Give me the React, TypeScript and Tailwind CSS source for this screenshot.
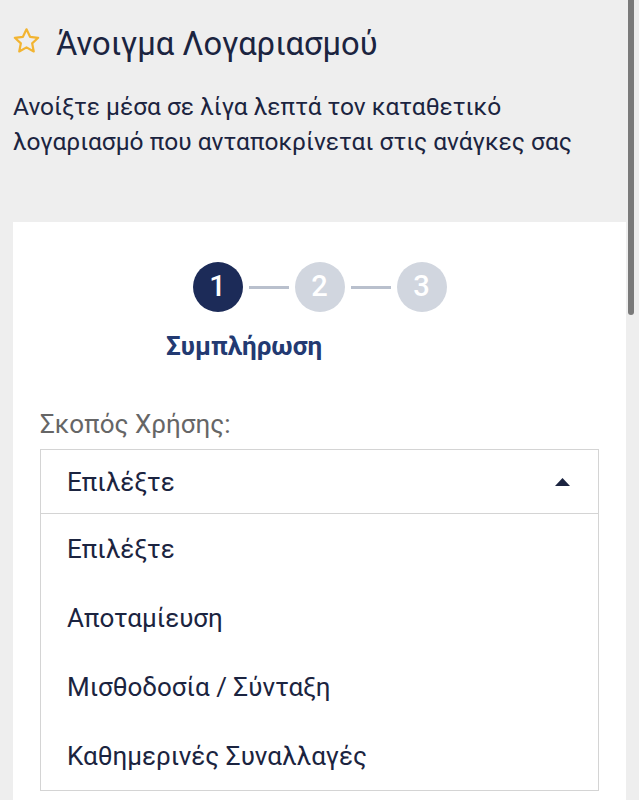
import React from "react";

function Star() {
  return (
    <svg width="27" height="26" viewBox="1 1.5 22 21" fill="none" stroke="#f2b431" strokeWidth="1.8" strokeLinejoin="round">
      <path d="M12 2.5l2.9 6.1 6.6.8-4.9 4.5 1.3 6.6L12 17.2l-5.9 3.3 1.3-6.6-4.9-4.5 6.6-.8z" />
    </svg>
  );
}

export default function App() {
  const items = ["Επιλέξτε", "Αποταμίευση", "Μισθοδοσία / Σύνταξη", "Καθημερινές Συναλλαγές"];
  return (
    <div className="relative w-full h-[800px] overflow-hidden bg-[#eeeeee] text-[#1b2440]" style={{ fontFamily: "Roboto, 'Noto Sans', sans-serif" }}>
      <div className="absolute right-[5px] top-0 w-[6px] h-[315px] bg-[#7a7a7a] rounded-b-[3px]" />
      <div className="px-[13px] pt-[25px]">
        <div className="flex items-start gap-[16px]">
          <div className="pt-[3px]"><Star /></div>
          <h1 className="text-[32.7px] leading-[38px] font-normal text-[#1b2440]">Άνοιγμα Λογαριασμού</h1>
        </div>
        <p className="mt-[26px] text-[24.5px] leading-[35px] text-[#1b2440]">
          Ανοίξτε μέσα σε λίγα λεπτά τον καταθετικό
          <br />
          λογαριασμό που ανταποκρίνεται στις ανάγκες σας
        </p>
      </div>
      <div className="mx-[13px] mt-[63px] bg-white px-[27px] pt-[40px] h-[700px]">
        <div className="flex items-center justify-center gap-[6px]">
          <div className="w-[50px] h-[50px] rounded-full bg-[#1c2b58] flex items-center justify-center text-white text-[29px] font-medium">1</div>
          <div className="w-[40px] h-[3px] bg-[#b9c0cd]" />
          <div className="w-[50px] h-[50px] rounded-full bg-[#d1d6df] flex items-center justify-center text-white text-[29px] font-medium">2</div>
          <div className="w-[40px] h-[3px] bg-[#b9c0cd]" />
          <div className="w-[50px] h-[50px] rounded-full bg-[#d1d6df] flex items-center justify-center text-white text-[29px] font-medium">3</div>
        </div>
        <div className="mt-[19px] pl-[126px] text-[26px] leading-[30px] font-bold text-[#233a72]">Συμπλήρωση</div>
        <div className="mt-[48px] text-[26px] leading-[30px] text-[#666666]">Σκοπός Χρήσης:</div>
        <div className="mt-[10px] border border-[#d4d4d4]">
          <div className="h-[64px] flex items-center justify-between pl-[26px] pr-[28px] border-b border-[#d4d4d4]">
            <span className="text-[26px] leading-[30px] text-[#1b2440]">Επιλέξτε</span>
            <svg width="15" height="8" viewBox="0 0 15 8"><path d="M7.5 0L15 8H0z" fill="#1b2440" /></svg>
          </div>
          <div>
            {items.map((t) => (
              <div key={t} className="h-[69px] flex items-center pl-[26px] text-[26px] leading-[30px] text-[#1b2440]">{t}</div>
            ))}
          </div>
        </div>
      </div>
    </div>
  );
}
